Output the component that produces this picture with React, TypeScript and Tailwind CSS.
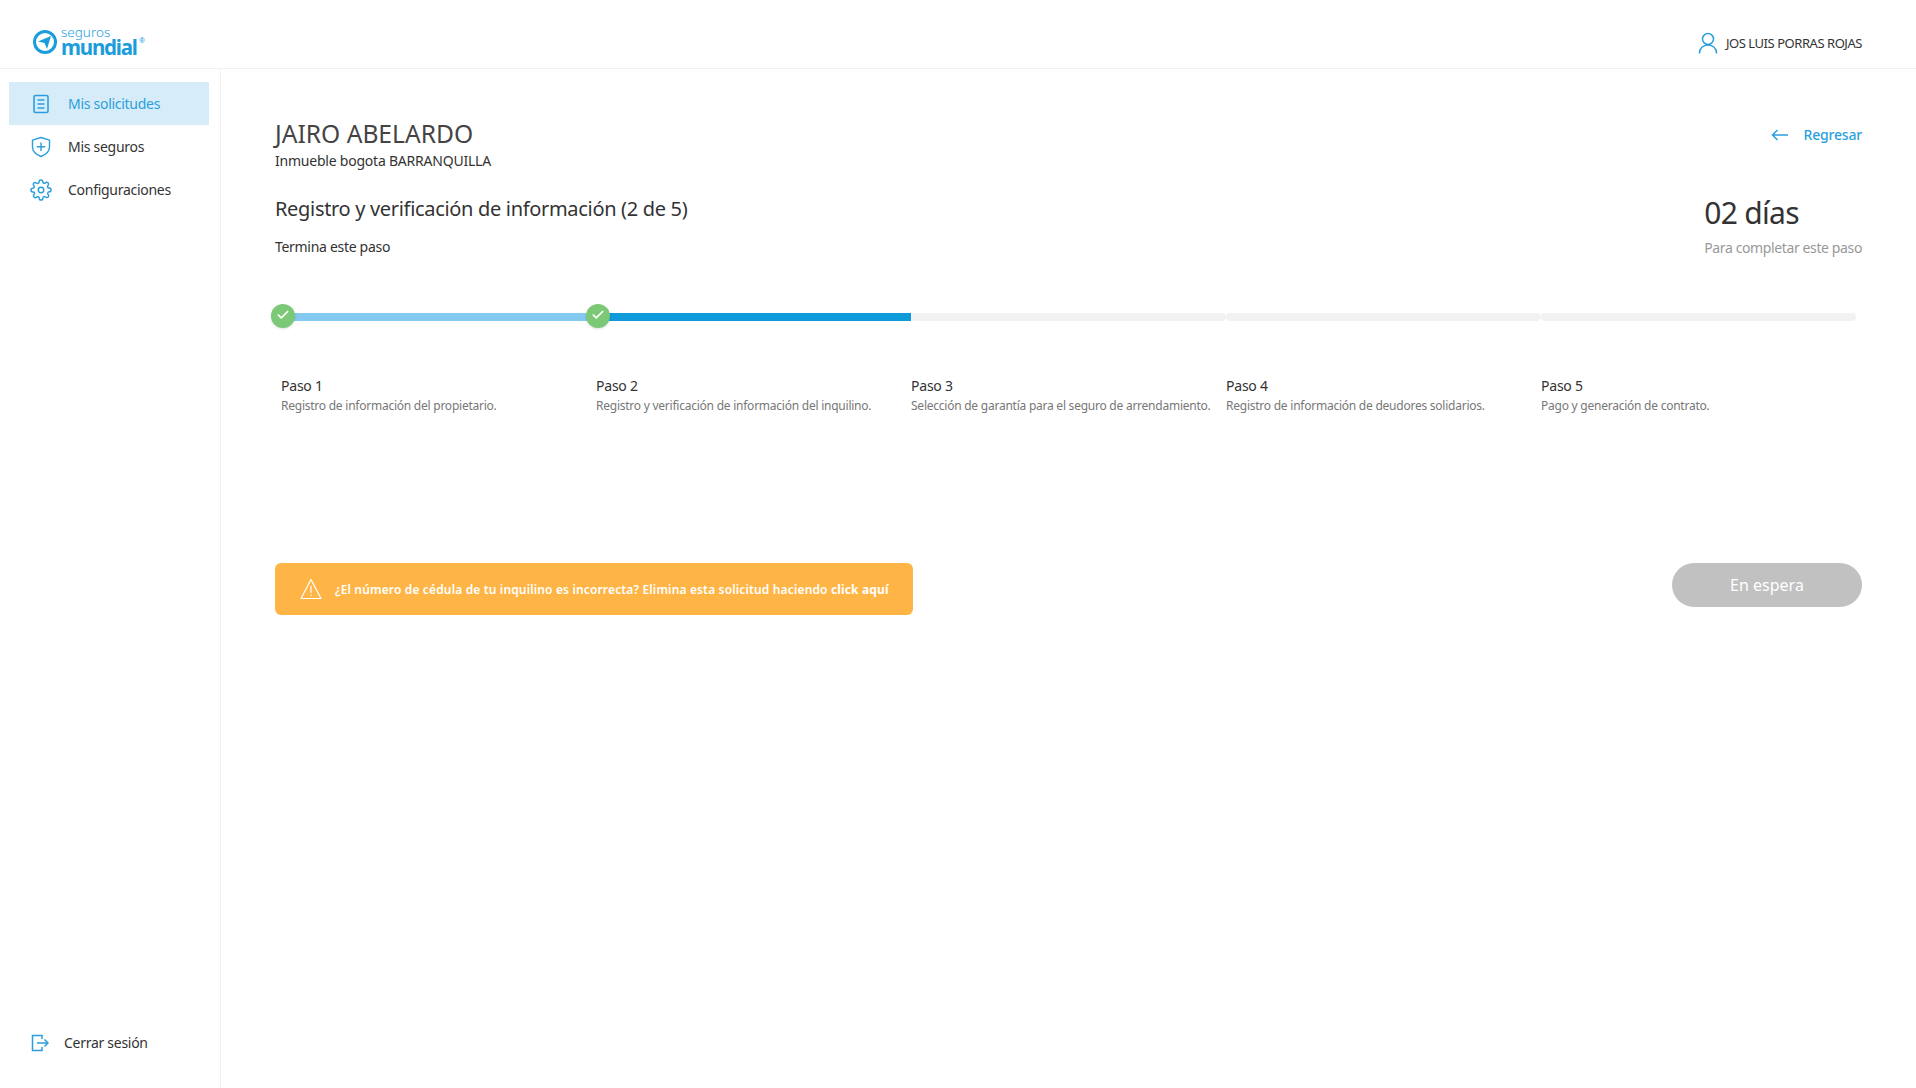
import React from "react";
import { Check } from "lucide-react";

const steps = [
  { title: "Paso 1", text: "Registro de información del propietario.", bar: "bg-[#84c9f1]", done: true },
  { title: "Paso 2", text: "Registro y verificación de información del inquilino.", bar: "bg-[#0f9ad9]", done: true },
  { title: "Paso 3", text: "Selección de garantía para el seguro de arrendamiento.", bar: "bg-[#f2f2f2] rounded-sm", done: false },
  { title: "Paso 4", text: "Registro de información de deudores solidarios.", bar: "bg-[#f2f2f2] rounded-sm", done: false },
  { title: "Paso 5", text: "Pago y generación de contrato.", bar: "bg-[#f2f2f2] rounded-sm", done: false },
];

const Logo = () => (
  <div className="flex items-center gap-[4px] mt-[-3px]">
    <svg width="24" height="24" viewBox="0 0 24 24" fill="none" className="mt-[1px]">
      <circle cx="12" cy="12" r="10.500" stroke="#1b9ddb" strokeWidth="3" />
      <path d="M5 11.500 18 6 14 19 11.500 13Z" fill="#1b9ddb" />
    </svg>
    <div className="flex flex-col relative text-[#1b9ddb]">
      <span className="text-[13.500px] leading-[11px] font-light">seguros</span>
      <span className="text-[20.500px] leading-[18px] font-bold tracking-[-1.200px]">mundial</span>
      <span className="absolute right-[-8px] top-[10px] text-[7px] leading-none">®</span>
    </div>
  </div>
);

const DocIcon = () => (
  <svg width="18" height="20" viewBox="0 0 18 20" fill="none" stroke="#2b9fdc" strokeWidth="1.600">
    <rect x="2" y="1.500" width="14" height="17" rx="1.500" />
    <path d="M5.500 6h7M5.500 10h7M5.500 14h7" />
  </svg>
);

const ShieldIcon = () => (
  <svg width="20" height="22" viewBox="0 0 20 22" fill="none" stroke="#2b9fdc" strokeWidth="1.400">
    <path d="M10 1.500 18.500 4.200V11c0 4.500-3.800 7.600-8.500 9.500C5.300 18.600 1.500 15.500 1.500 11V4.200Z" strokeLinejoin="round" />
    <path d="M10 6.500v8.500M5.800 10.800h8.400" />
  </svg>
);

const GearIcon = () => (
  <svg width="22" height="22" viewBox="0 0 24 24" fill="none" stroke="#2b9fdc" strokeWidth="1.600" strokeLinecap="round" strokeLinejoin="round">
    <circle cx="12" cy="12" r="3" />
    <path d="M19.400 15a1.650 1.650 0 0 0 .33 1.820l.06.06a2 2 0 1 1-2.830 2.830l-.06-.06a1.650 1.650 0 0 0-2.820 1.170V21a2 2 0 1 1-4 0v-.09a1.650 1.650 0 0 0-2.800-1.170l-.06.06a2 2 0 1 1-2.830-2.830l.06-.06a1.650 1.650 0 0 0-1.170-2.820H3a2 2 0 1 1 0-4h.09a1.650 1.650 0 0 0 1.170-2.800l-.06-.06a2 2 0 1 1 2.830-2.830l.06.06a1.650 1.650 0 0 0 2.820-1.170V3a2 2 0 1 1 4 0v.09a1.650 1.650 0 0 0 2.800 1.170l.06-.06a2 2 0 1 1 2.830 2.830l-.06.06a1.650 1.650 0 0 0 1.170 2.820H21a2 2 0 1 1 0 4h-.09a1.650 1.650 0 0 0-1.510 1.090Z" />
  </svg>
);

const LogoutIcon = () => (
  <svg width="18" height="18" viewBox="0 0 18 18" fill="none" stroke="#2b9fdc" strokeWidth="1.500">
    <path d="M11 5V1.500H1.500v15H11V13" />
    <path d="M6 9h11M13.500 5.500 17 9l-3.500 3.500" />
  </svg>
);

const UserIcon = () => (
  <svg width="20" height="22" viewBox="0 0 20 22" fill="none" stroke="#2b9fdc" strokeWidth="1.500" strokeLinecap="round">
    <circle cx="10" cy="7" r="5.500" />
    <path d="M1.500 21c0-4.500 3.500-8 8.500-8s8.500 3.500 8.500 8" />
  </svg>
);

const BackIcon = () => (
  <svg width="18" height="12" viewBox="0 0 18 12" fill="none" stroke="#2b9fdc" strokeWidth="1.500">
    <path d="M17 6H1.500M6.500 1 1.500 6l5 5" />
  </svg>
);

const WarnIcon = () => (
  <svg width="22" height="22" viewBox="0 0 22 22" fill="none" stroke="#fff" strokeWidth="1.200" strokeLinejoin="round">
    <path d="M11 1.500 21 20.500H1Z" />
    <path d="M11 8v7M11 16.500v1.500" />
  </svg>
);

export default function App() {
  return (
    <div className="h-[1088px] bg-white flex flex-col text-[#333] font-['Noto_Sans',sans-serif]">
      <header className="h-[69px] shrink-0 border-b border-[#f0f0f0] flex items-center justify-between pl-[33px] pr-[54px] pt-[18px]">
        <Logo />
        <div className="flex items-center gap-[8px] text-[13px] tracking-[-0.450px]">
          <UserIcon />
          <span className="pt-[1px]">JOS LUIS PORRAS ROJAS</span>
        </div>
      </header>

      <div className="flex-1 flex min-h-0">
        <aside className="w-[221px] shrink-0 border-r border-[#f0f0f0] flex flex-col justify-between pt-[13px] pb-[35px] text-[14px] tracking-[-0.280px]">
          <nav className="flex flex-col pl-[9px] pr-[11px]">
            <a className="h-[43px] flex items-center bg-[#d6ecf8] text-[#2b9fdc]">
              <span className="w-[59px] flex justify-center pl-[5px]"><DocIcon /></span>
              Mis solicitudes
            </a>
            <a className="h-[43px] flex items-center">
              <span className="w-[59px] flex justify-center pl-[5px]"><ShieldIcon /></span>
              Mis seguros
            </a>
            <a className="h-[43px] flex items-center">
              <span className="w-[59px] flex justify-center pl-[5px]"><GearIcon /></span>
              Configuraciones
            </a>
          </nav>
          <a className="flex items-center pl-[31px] gap-[15px]">
            <LogoutIcon />
            Cerrar sesión
          </a>
        </aside>

        <main className="flex-1 pl-[54px] pr-[54px] pt-[51px]">
          <div className="flex items-start justify-between">
            <div>
              <h1 className="text-[24.600px] leading-[28px] text-[#444]">JAIRO ABELARDO</h1>
              <p className="text-[14px] leading-[20px] mt-[3px] tracking-[-0.220px]">Inmueble bogota BARRANQUILLA</p>
            </div>
            <a className="flex items-center gap-[15px] text-[14px] text-[#2b9fdc] font-medium mt-[4px] tracking-[-0.200px]">
              <BackIcon />
              Regresar
            </a>
          </div>

          <div className="flex items-start justify-between mt-[24px]">
            <div>
              <h2 className="text-[20px] leading-[28px] tracking-[-0.320px]">Registro y verificación de información (2 de 5)</h2>
              <p className="text-[14px] leading-[20px] mt-[14px] tracking-[-0.300px]">Termina este paso</p>
            </div>
            <div className="mt-[-2px]">
              <p className="text-[30px] leading-[40px] tracking-[-0.700px]">02 días</p>
              <p className="text-[14px] leading-[20px] text-[#999] mt-[5px] tracking-[-0.380px]">Para completar este paso</p>
            </div>
          </div>

          <div className="grid grid-cols-[repeat(5,315px)] ml-[6px] mt-[55px]">
            {steps.map((step) => (
              <div key={step.title} className={`relative h-[8px] ${step.bar}`}>
                {step.done && (
                  <span className="absolute left-[-10px] top-[-9px] w-[24px] h-[24px] rounded-full bg-[#7bc876] shadow-sm flex items-center justify-center">
                    <Check size={14} strokeWidth={3} className="text-white mt-[-2px]" />
                  </span>
                )}
              </div>
            ))}
          </div>

          <div className="grid grid-cols-[repeat(5,315px)] ml-[6px] mt-[55px]">
            {steps.map((step) => (
              <div key={step.title}>
                <p className="text-[14px] leading-[20px] tracking-[-0.220px]">{step.title}</p>
                <p className="text-[12px] leading-[19px] text-[#777] whitespace-nowrap tracking-[-0.240px]">{step.text}</p>
              </div>
            ))}
          </div>

          <div className="flex items-start justify-between mt-[148px]">
            <div className="w-[638px] h-[52px] rounded-[6px] bg-[#ffb545] flex items-center pl-[25px] gap-[13px] text-white text-[12px] font-semibold">
              <WarnIcon />
              <span className="tracking-[0.150px] pt-[1px]">¿El número de cédula de tu inquilino es incorrecta? Elimina esta solicitud haciendo <b className="font-bold">click aquí</b></span>
            </div>
            <button className="w-[190px] h-[44px] rounded-full bg-[#c1c1c1] text-white text-[16px]">En espera</button>
          </div>
        </main>
      </div>
    </div>
  );
}
